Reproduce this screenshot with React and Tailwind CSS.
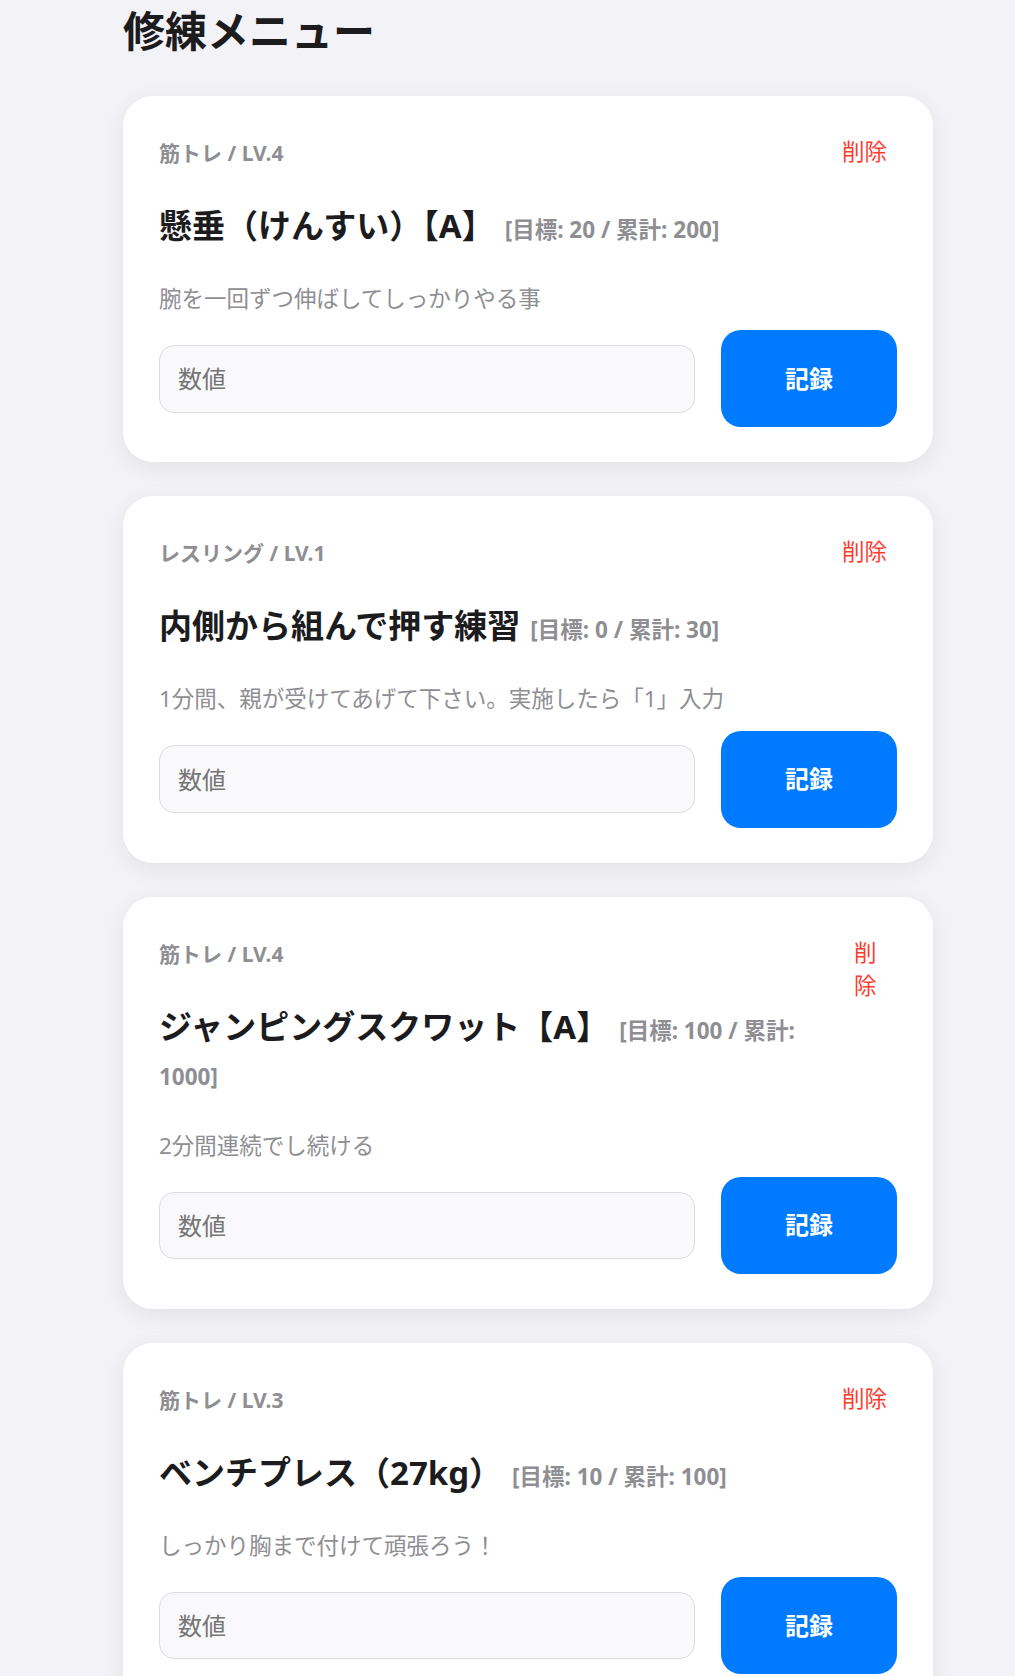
import React from "react";

const items = [
  {
    cat: "筋トレ / LV.4",
    title: "懸垂（けんすい）【A】",
    goal: 20,
    total: 200,
    desc: "腕を一回ずつ伸ばしてしっかりやる事",
  },
  {
    cat: "レスリング / LV.1",
    title: "内側から組んで押す練習",
    goal: 0,
    total: 30,
    desc: "1分間、親が受けてあげて下さい。実施したら「1」入力",
  },
  {
    cat: "筋トレ / LV.4",
    title: "ジャンピングスクワット【A】",
    goal: 100,
    total: 1000,
    desc: "2分間連続でし続ける",
  },
  {
    cat: "筋トレ / LV.3",
    title: "ベンチプレス（27kg）",
    goal: 10,
    total: 100,
    desc: "しっかり胸まで付けて頑張ろう！",
  },
];

function Card({ item }) {
  return (
    <div className="bg-white rounded-[30px] px-[36px] pt-[36px] pb-[35px] shadow-[0_6px_24px_rgba(0,0,0,0.07)]">
      <div className="flex justify-between items-start">
        <div>
          <div className="text-[21px] leading-[42px] font-bold text-[#8e8e93]">
            {item.cat}
          </div>
          <h2 className="mt-[31px] text-[33px] leading-[42px] font-bold text-[#1c1c1e]">
            {item.title}
            <span className="ml-[10px] text-[22.5px] font-bold text-[#8e8e93]">
              [目標: {item.goal} / 累計: {item.total}]
            </span>
          </h2>
        </div>
        <button className="text-[22.5px] leading-[33px] py-[3px] px-[10px] text-[#ff3b30] bg-transparent">
          削除
        </button>
      </div>
      <p className="mt-[31px] text-[22.5px] leading-[33.75px] text-[#8e8e93]">
        {item.desc}
      </p>
      <div className="mt-[14.5px] flex items-center gap-[26.5px]">
        <input
          type="number"
          placeholder="数値"
          className="flex-1 min-w-0 h-[67.5px] rounded-[15px] border-[1.5px] border-[#dcdcdc] bg-[#f9f9fb] px-[18px] text-[24px] text-[#1c1c1e] placeholder:text-[#757575] outline-none"
        />
        <button className="w-[176px] h-[97px] shrink-0 rounded-[20px] bg-[#007aff] text-white text-[24px] font-bold">
          記録
        </button>
      </div>
    </div>
  );
}

export default function App() {
  return (
    <div className="h-[1676px] overflow-hidden bg-[#f2f2f7] font-['Noto_Sans','Noto_Sans_CJK_JP',sans-serif]">
      <div className="ml-[123px] w-[810px] pt-[6px]">
        <h1 className="text-[42px] leading-[50px] font-bold text-[#1c1c1e] mb-[40px]">
          修練メニュー
        </h1>
        <div className="flex flex-col gap-[34px]">
          {items.map((it, i) => (
            <Card key={i} item={it} />
          ))}
        </div>
      </div>
    </div>
  );
}
